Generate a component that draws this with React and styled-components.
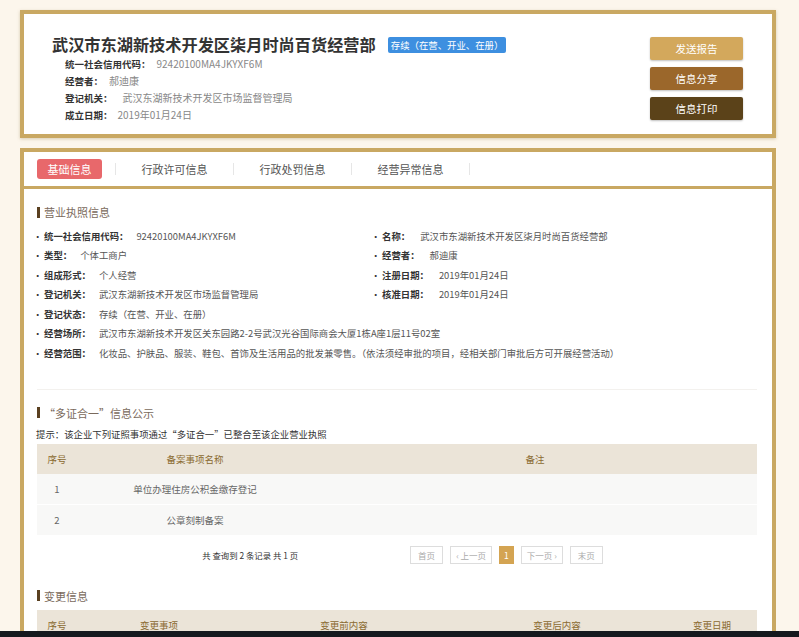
import React from "react";
import styled, { createGlobalStyle } from "styled-components";

const GlobalStyle = createGlobalStyle`
  body {
    margin: 0;
    background: #fcf6ec;
    font-family: "Noto Sans CJK SC", "Noto Sans", "Liberation Sans", sans-serif;
    color: #333;
  }
`;

const Page = styled.div`
  padding: 10px 23px 40px 20px;
  display: flex;
  flex-direction: column;
  gap: 10px;
`;

const HeadCard = styled.div`
  border: 4px solid #c9a862;
  background: #fff;
  box-shadow: 0 1px 3px rgba(150, 120, 60, 0.35);
  display: flex;
  align-items: center;
  justify-content: space-between;
  padding: 20px 29px 11px 28px;
`;

const HeadInfo = styled.div`
  display: flex;
  flex-direction: column;
`;

const TitleRow = styled.div`
  display: flex;
  align-items: center;
  gap: 12px;
  height: 21px;
`;

const Title = styled.h1`
  margin: -2px 0 0;
  font-size: 16.2px;
  font-weight: 700;
  color: #333;
`;

const Badge = styled.span`
  background: #3d8fe0;
  color: #fff;
  font-size: 9.4px;
  padding: 0 3px;
  height: 16px;
  line-height: 16px;
  border-radius: 2px;
`;

const HeadRow = styled.div`
  display: flex;
  align-items: center;
  height: 17px;
  padding-left: 13px;
`;

const HeadLabel = styled.span`
  font-size: 9.5px;
  font-weight: 700;
  color: #333;
  margin-right: ${(p) => p.gap}px;
`;

const HeadValue = styled.span`
  font-size: 10px;
  color: #888;
`;

const ButtonCol = styled.div`
  display: flex;
  flex-direction: column;
  gap: 7px;
`;

const ActionButton = styled.button`
  width: 93px;
  height: 23px;
  border: none;
  border-radius: 2px;
  background: ${(p) => p.bg};
  color: #fff;
  font-family: inherit;
  font-size: 10.5px;
  box-shadow: 0 1px 2px rgba(0, 0, 0, 0.25);
`;

const MainCard = styled.div`
  border: 4px solid #c9a862;
  border-bottom: none;
  background: #fff;
`;

const TabBar = styled.div`
  display: flex;
  align-items: center;
  height: 34px;
  padding-left: 13px;
  border-bottom: 3px solid #c9a862;
  background: #fff;
`;

const ActiveTab = styled.div`
  width: 65px;
  height: 20px;
  line-height: 20px;
  text-align: center;
  background: #e8686b;
  color: #fff;
  border-radius: 3px;
  font-size: 11px;
  margin-right: 13px;
`;

const Tab = styled.div`
  width: 117px;
  text-align: center;
  font-size: 11px;
  color: #555;
  border-left: 1px solid #e6e6e6;
  line-height: 12px;
`;

const TabEnd = styled.div`
  width: 1px;
  height: 12px;
  background: #e6e6e6;
`;

const Content = styled.div`
  padding: 16px 15px 0 13px;
`;

const SectionTitle = styled.div`
  display: flex;
  align-items: center;
  height: 14px;
  font-size: 11px;
  color: #7a6a5c;
  margin-top: ${(p) => p.top || 0}px;
  &::before {
    content: "";
    width: 3px;
    height: 11px;
    background: #5a4020;
    margin-right: 4px;
  }
`;

const FieldGrid = styled.div`
  display: grid;
  grid-template-columns: 338px 1fr;
  margin-top: 7px;
  padding-bottom: 26px;
  border-bottom: 1px solid #f3f1ee;
`;

const Field = styled.div`
  display: flex;
  align-items: center;
  height: 19.5px;
  font-size: 9.4px;
  grid-column: ${(p) => (p.wide ? "1 / 3" : "auto")};
`;

const FieldLabel = styled.span`
  display: flex;
  font-weight: 700;
  color: #333;
  margin-right: ${(p) => p.gap}px;
  &::before {
    content: "·";
    display: inline-block;
    width: 11px;
    margin-left: -4px;
    font-weight: 400;
  }
`;

const FieldValue = styled.span`
  color: #555;
`;

const Hint = styled.div`
  font-size: 9.4px;
  color: #333;
  height: 15px;
  line-height: 15px;
  margin-top: 7px;
  margin-left: -1px;
`;

const Table = styled.div`
  display: flex;
  flex-direction: column;
  width: 720px;
  margin-top: ${(p) => p.top || 0}px;
`;

const HeadRowT = styled.div`
  display: grid;
  grid-template-columns: ${(p) => p.cols};
  height: 30px;
  align-items: center;
  background: #ebe4d8;
  font-size: 9.5px;
  color: #8a6a30;
`;

const BodyRow = styled.div`
  display: grid;
  grid-template-columns: ${(p) => p.cols};
  height: 30px;
  align-items: center;
  background: #f8f8f7;
  border-bottom: 1px solid #fff;
  font-size: 9.5px;
  color: #666;
`;

const Cell = styled.div`
  text-align: center;
`;

const Pager = styled.div`
  display: flex;
  align-items: center;
  justify-content: center;
  margin-top: 9px;
  height: 20px;
  padding-left: 18px;
`;

const PagerText = styled.span`
  font-size: 8.4px;
  color: #333;
  margin-right: 112px;
`;

const PageBtn = styled.span`
  height: 16px;
  line-height: 16px;
  padding: 0 ${(p) => p.pad}px;
  margin-right: 7px;
  border: 1px solid ${(p) => (p.current ? "#d4a452" : "#ddd")};
  background: ${(p) => (p.current ? "#d4a452" : "#fff")};
  color: ${(p) => (p.current ? "#fff" : "#aaa")};
  font-size: 8.5px;
`;

const BottomStrip = styled.div`
  position: fixed;
  left: 0;
  right: 0;
  bottom: 0;
  height: 6px;
  background: #15191e;
`;

const fields = [
  { label: "统一社会信用代码：", value: "92420100MA4JKYXF6M", gap: 8 },
  { label: "名称：", value: "武汉市东湖新技术开发区柒月时尚百货经营部", gap: 10 },
  { label: "类型：", value: "个体工商户", gap: 8 },
  { label: "经营者：", value: "郝迪康", gap: 10 },
  { label: "组成形式：", value: "个人经营", gap: 8 },
  { label: "注册日期：", value: "2019年01月24日", gap: 10 },
  { label: "登记机关：", value: "武汉东湖新技术开发区市场监督管理局", gap: 8 },
  { label: "核准日期：", value: "2019年01月24日", gap: 10 },
  { label: "登记状态：", value: "存续（在营、开业、在册）", gap: 8, wide: true },
  { label: "经营场所：", value: "武汉市东湖新技术开发区关东园路2-2号武汉光谷国际商会大厦1栋A座1层11号02室", gap: 8, wide: true },
  { label: "经营范围：", value: "化妆品、护肤品、服装、鞋包、首饰及生活用品的批发兼零售。（依法须经审批的项目，经相关部门审批后方可开展经营活动）", gap: 8, wide: true },
];

const cols1 = "40px 236px 1fr";
const cols2 = "40px 164px 206px 220px 1fr";

export default function App() {
  return (
    <>
      <GlobalStyle />
      <Page>
        <HeadCard>
          <HeadInfo>
            <TitleRow>
              <Title>武汉市东湖新技术开发区柒月时尚百货经营部</Title>
              <Badge>存续（在营、开业、在册）</Badge>
            </TitleRow>
            <HeadRow>
              <HeadLabel gap={6}>统一社会信用代码：</HeadLabel>
              <HeadValue>92420100MA4JKYXF6M</HeadValue>
            </HeadRow>
            <HeadRow>
              <HeadLabel gap={6}>经营者：</HeadLabel>
              <HeadValue>郝迪康</HeadValue>
            </HeadRow>
            <HeadRow>
              <HeadLabel gap={10}>登记机关：</HeadLabel>
              <HeadValue>武汉东湖新技术开发区市场监督管理局</HeadValue>
            </HeadRow>
            <HeadRow>
              <HeadLabel gap={5}>成立日期：</HeadLabel>
              <HeadValue>2019年01月24日</HeadValue>
            </HeadRow>
          </HeadInfo>
          <ButtonCol>
            <ActionButton bg="#d3a85c">发送报告</ActionButton>
            <ActionButton bg="#9b672b">信息分享</ActionButton>
            <ActionButton bg="#5b4219">信息打印</ActionButton>
          </ButtonCol>
        </HeadCard>

        <MainCard>
          <TabBar>
            <ActiveTab>基础信息</ActiveTab>
            <Tab>行政许可信息</Tab>
            <Tab>行政处罚信息</Tab>
            <Tab>经营异常信息</Tab>
            <TabEnd />
          </TabBar>
          <Content>
            <SectionTitle>营业执照信息</SectionTitle>
            <FieldGrid>
              {fields.map((f) => (
                <Field key={f.label} wide={f.wide}>
                  <FieldLabel gap={f.gap}>{f.label}</FieldLabel>
                  <FieldValue>{f.value}</FieldValue>
                </Field>
              ))}
            </FieldGrid>

            <SectionTitle top={16}>“多证合一”信息公示</SectionTitle>
            <Hint>提示：该企业下列证照事项通过“多证合一”已整合至该企业营业执照</Hint>
            <Table top={2}>
              <HeadRowT cols={cols1}>
                <Cell>序号</Cell>
                <Cell>备案事项名称</Cell>
                <Cell>备注</Cell>
              </HeadRowT>
              <BodyRow cols={cols1}>
                <Cell>1</Cell>
                <Cell>单位办理住房公积金缴存登记</Cell>
                <Cell />
              </BodyRow>
              <BodyRow cols={cols1}>
                <Cell>2</Cell>
                <Cell>公章刻制备案</Cell>
                <Cell />
              </BodyRow>
            </Table>
            <Pager>
              <PagerText>共 查询到 2 条记录 共 1 页</PagerText>
              <PageBtn pad={7}>首页</PageBtn>
              <PageBtn pad={5}>‹ 上一页</PageBtn>
              <PageBtn pad={4} current>1</PageBtn>
              <PageBtn pad={5}>下一页 ›</PageBtn>
              <PageBtn pad={7}>末页</PageBtn>
            </Pager>

            <SectionTitle top={24}>变更信息</SectionTitle>
            <Table top={7}>
              <HeadRowT cols={cols2}>
                <Cell>序号</Cell>
                <Cell>变更事项</Cell>
                <Cell>变更前内容</Cell>
                <Cell>变更后内容</Cell>
                <Cell>变更日期</Cell>
              </HeadRowT>
            </Table>
          </Content>
        </MainCard>
      </Page>
      <BottomStrip />
    </>
  );
}
